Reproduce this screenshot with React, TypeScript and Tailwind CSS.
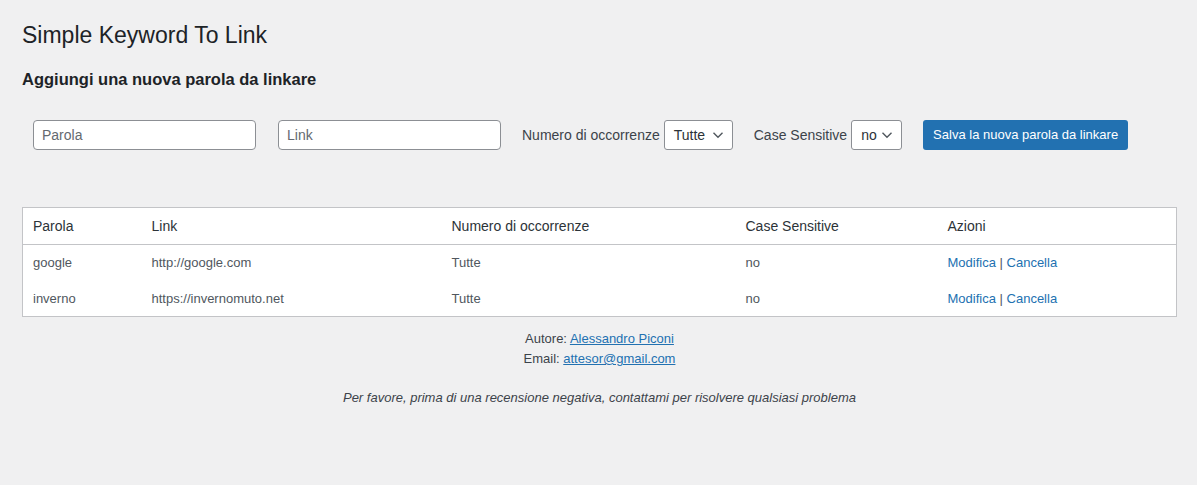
import * as React from 'react'

const font = { fontFamily: '"Liberation Sans", Arial, sans-serif' }

function Chevron() {
  return (
    <svg width="12" height="8" viewBox="0 0 12 8" className="shrink-0">
      <path d="M1.5 1.8 6 6.2l4.5-4.4" fill="none" stroke="#50575e" strokeWidth="1.4" />
    </svg>
  )
}

function FakeSelect({ value, width }: { value: string; width: string }) {
  return (
    <div
      className={`flex h-[30px] items-center justify-between rounded-[3px] border border-[#8c8f94] bg-white pl-[9px] pr-[8px] text-[14px] text-[#2c3338] ${width}`}
    >
      <span>{value}</span>
      <Chevron />
    </div>
  )
}

const rows = [
  { parola: 'google', link: 'http://google.com', numero: 'Tutte', cs: 'no' },
  { parola: 'inverno', link: 'https://invernomuto.net', numero: 'Tutte', cs: 'no' },
]

export default function App() {
  return (
    <div className="min-h-[485px] w-full bg-[#f0f0f1] pl-[22px] pr-[20px] text-[#3c434a]" style={font}>
      <h1 className="pt-[20px] text-[23px] leading-[30px] font-normal text-[#1d2327]">Simple Keyword To Link</h1>

      <h2 className="mt-[18px] text-[16.5px] leading-[22px] font-bold text-[#1d2327]">
        Aggiungi una nuova parola da linkare
      </h2>

      {/* form */}
      <div className="mt-[30px] flex items-center pl-[11px]">
        <input
          placeholder="Parola"
          className="h-[30px] w-[223px] rounded-[4px] border border-[#8c8f94] bg-white px-[8px] text-[14px] placeholder:text-[#646970] outline-none"
        />
        <input
          placeholder="Link"
          className="ml-[22px] h-[30px] w-[223px] rounded-[4px] border border-[#8c8f94] bg-white px-[8px] text-[14px] placeholder:text-[#646970] outline-none"
        />
        <span className="ml-[21px] mr-[4px] text-[14px] text-[#3c434a]">Numero di occorrenze</span>
        <FakeSelect value="Tutte" width="w-[69px]" />
        <span className="ml-[21px] mr-[4px] text-[14px] text-[#3c434a]">Case Sensitive</span>
        <FakeSelect value="no" width="w-[51px]" />
        <button className="ml-[21px] h-[30px] w-[205px] rounded-[3px] bg-[#2271b1] text-[13px] text-white">
          Salva la nuova parola da linkare
        </button>
      </div>

      {/* table */}
      <table className="mt-[57px] w-[1155px] table-fixed border-collapse border border-[#c3c4c7] bg-white">
        <thead>
          <tr className="h-[37px] border-b border-[#c3c4c7] text-left text-[14px] text-[#2c3338]">
            <th className="w-[129px] pl-[10px] font-normal">Parola</th>
            <th className="w-[300px] font-normal">Link</th>
            <th className="w-[294px] font-normal">Numero di occorrenze</th>
            <th className="w-[202px] font-normal">Case Sensitive</th>
            <th className="font-normal">Azioni</th>
          </tr>
        </thead>
        <tbody className="text-[13px] text-[#50575e]">
          {rows.map((r) => (
            <tr key={r.parola} className="h-[36px]">
              <td className="pl-[10px]">{r.parola}</td>
              <td>{r.link}</td>
              <td>{r.numero}</td>
              <td>{r.cs}</td>
              <td>
                <a className="text-[#2271b1]">Modifica</a>
                <span className="text-[#50575e]"> | </span>
                <a className="text-[#2271b1]">Cancella</a>
              </td>
            </tr>
          ))}
        </tbody>
      </table>

      {/* footer */}
      <div className="mt-[12px] w-[1155px] text-center text-[13px] leading-[20px] text-[#3c434a]">
        <p>
          Autore: <a className="text-[#2271b1] underline">Alessandro Piconi</a>
        </p>
        <p>
          Email: <a className="text-[#2271b1] underline">attesor@gmail.com</a>
        </p>
        <p className="mt-[19px] italic">
          Per favore, prima di una recensione negativa, contattami per risolvere qualsiasi problema
        </p>
      </div>
    </div>
  )
}
